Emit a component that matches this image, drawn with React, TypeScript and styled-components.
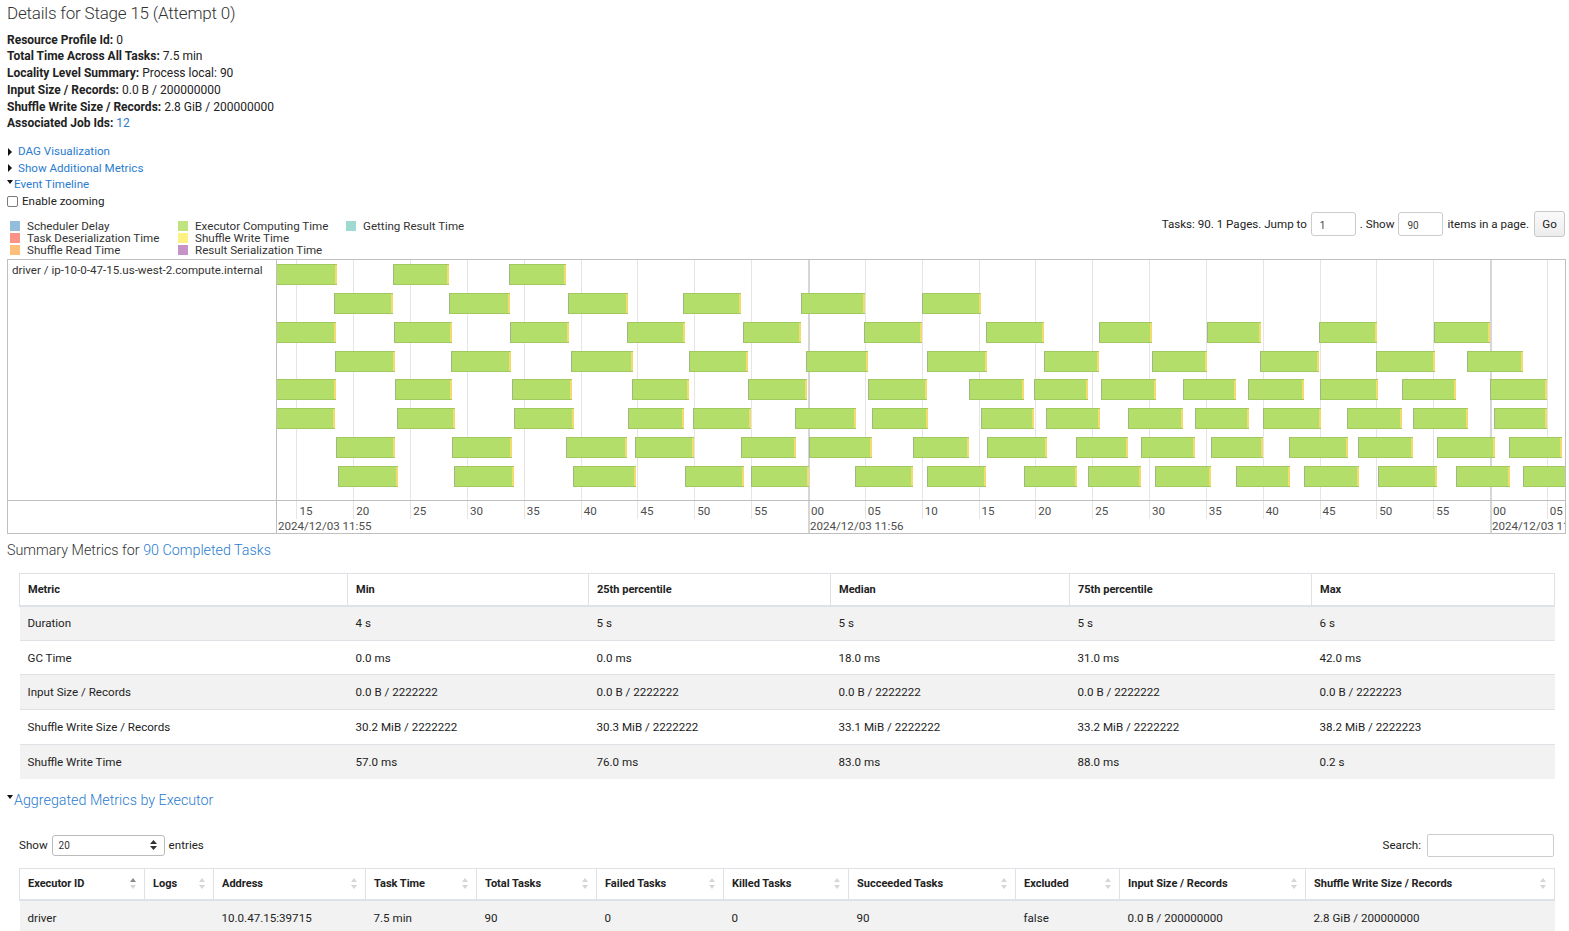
import styled, { createGlobalStyle } from "styled-components";

const GlobalStyle = createGlobalStyle`
  html, body {
    margin: 0;
    padding: 0;
    background: #fff;
  }
  body {
    font-family: Roboto, "Liberation Sans", Arial, sans-serif;
    font-size: 11.6px;
    color: #333;
  }
`;

const LINK = "#2a7ccf";

// task bars, absolute x (page px) per row
const ROWS: number[][][] = [
  [[276, 337], [393, 449], [509, 566]],
  [[334, 393], [449, 510], [568, 628], [683, 741], [801, 865], [922, 981]],
  [[276, 336], [394, 452], [510, 569], [627, 685], [743, 801], [864, 922], [986, 1044], [1099, 1152], [1207, 1261], [1319, 1377], [1434, 1490]],
  [[335, 395], [451, 511], [571, 633], [689, 748], [806, 868], [927, 987], [1044, 1099], [1152, 1207], [1260, 1319], [1376, 1435], [1467, 1523]],
  [[276, 336], [395, 452], [512, 572], [632, 689], [748, 807], [868, 927], [969, 1024], [1034, 1088], [1101, 1156], [1183, 1236], [1248, 1304], [1320, 1378], [1402, 1456], [1490, 1547]],
  [[276, 335], [397, 455], [514, 574], [628, 684], [693, 751], [795, 856], [872, 928], [981, 1034], [1046, 1100], [1128, 1183], [1195, 1249], [1263, 1321], [1347, 1402], [1413, 1468], [1494, 1547]],
  [[336, 395], [452, 512], [566, 627], [635, 694], [741, 796], [809, 872], [913, 969], [987, 1047], [1076, 1128], [1141, 1195], [1211, 1263], [1289, 1348], [1358, 1413], [1437, 1495], [1509, 1562]],
  [[338, 398], [454, 514], [573, 636], [685, 744], [751, 809], [855, 913], [927, 986], [1024, 1077], [1088, 1141], [1155, 1211], [1236, 1290], [1304, 1359], [1378, 1437], [1456, 1510], [1523, 1570]],
];
const ROW_TOPS = [4, 33, 62, 91, 119, 148, 177, 206];
const ORIGIN = 277;
const PX_PER_SEC = 11.3667;
const secX = (s: number) => 531 + (s - 60) * PX_PER_SEC;
const TICKS = Array.from({ length: 23 }, (_, i) => 15 + i * 5);

const LEGEND = [
  [
    ["#80B1D3", "Scheduler Delay"],
    ["#FB8072", "Task Deserialization Time"],
    ["#FDB462", "Shuffle Read Time"],
  ],
  [
    ["#B3DE69", "Executor Computing Time"],
    ["#FFED6F", "Shuffle Write Time"],
    ["#BC80BD", "Result Serialization Time"],
  ],
  [["#8DD3C7", "Getting Result Time"]],
];

const SUMMARY_COLS = [328, 241, 242, 239, 242, 243];
const SUMMARY_HEAD = ["Metric", "Min", "25th percentile", "Median", "75th percentile", "Max"];
const SUMMARY_ROWS = [
  ["Duration", "4 s", "5 s", "5 s", "5 s", "6 s"],
  ["GC Time", "0.0 ms", "0.0 ms", "18.0 ms", "31.0 ms", "42.0 ms"],
  ["Input Size / Records", "0.0 B / 2222222", "0.0 B / 2222222", "0.0 B / 2222222", "0.0 B / 2222222", "0.0 B / 2222223"],
  ["Shuffle Write Size / Records", "30.2 MiB / 2222222", "30.3 MiB / 2222222", "33.1 MiB / 2222222", "33.2 MiB / 2222222", "38.2 MiB / 2222223"],
  ["Shuffle Write Time", "57.0 ms", "76.0 ms", "83.0 ms", "88.0 ms", "0.2 s"],
];

const EXEC_COLS = [125, 69, 152, 111, 120, 127, 125, 167, 104, 186, 249];
const EXEC_HEAD = [
  "Executor ID", "Logs", "Address", "Task Time", "Total Tasks", "Failed Tasks",
  "Killed Tasks", "Succeeded Tasks", "Excluded", "Input Size / Records", "Shuffle Write Size / Records",
];
const EXEC_ROW = ["driver", "", "10.0.47.15:39715", "7.5 min", "90", "0", "0", "90", "false", "0.0 B / 200000000", "2.8 GiB / 200000000"];

function SortIcon({ active }: { active?: boolean }) {
  return (
    <svg width="6" height="11" viewBox="0 0 6 11">
      <path d="M3 0 L6 4 L0 4 Z" fill={active ? "#8a8a8a" : "#d6d6d6"} />
      <path d="M3 11 L6 7 L0 7 Z" fill="#d6d6d6" />
    </svg>
  );
}

export default function App() {
  return (
    <>
      <GlobalStyle />
      <Page>
        <Title>Details for Stage 15 (Attempt 0)</Title>
        <InfoList>
          <li><strong>Resource Profile Id:</strong> 0</li>
          <li><strong>Total Time Across All Tasks:</strong> 7.5 min</li>
          <li><strong>Locality Level Summary:</strong> Process local: 90</li>
          <li><strong>Input Size / Records:</strong> 0.0 B / 200000000</li>
          <li><strong>Shuffle Write Size / Records:</strong> 2.8 GiB / 200000000</li>
          <li><strong>Associated Job Ids:</strong> <Link>12</Link></li>
        </InfoList>

        <Toggles>
          <Toggle><Arrow /><Link>DAG Visualization</Link></Toggle>
          <Toggle><Arrow /><Link>Show Additional Metrics</Link></Toggle>
          <Toggle $open><Arrow $open /><Link>Event Timeline</Link></Toggle>
          <Toggle $open><CheckBox />Enable zooming</Toggle>
        </Toggles>

        <ControlRow>
          <Legend>
            {LEGEND.map((col, i) => (
              <LegendCol key={i}>
                {col.map(([c, t]) => (
                  <LegendItem key={t}>
                    <Swatch $color={c} />
                    {t}
                  </LegendItem>
                ))}
              </LegendCol>
            ))}
          </Legend>
          <Pager>
            Tasks: 90. 1 Pages. Jump to
            <PageInput defaultValue="1" />
            . Show
            <PageInput defaultValue="90" />
            items in a page.
            <GoButton>Go</GoButton>
          </Pager>
        </ControlRow>

        <Timeline>
          <LabelPanel>
            <GroupLabel>driver / ip-10-0-47-15.us-west-2.compute.internal</GroupLabel>
            <AxisSpacer />
          </LabelPanel>
          <CenterPanel>
            {TICKS.map((s) => (
              <GridLine key={s} $major={s % 60 === 0} style={{ left: secX(s) }} />
            ))}
            <ItemArea>
              {ROWS.map((row, r) =>
                row.map(([a, b], i) => (
                  <Bar key={`${r}-${i}`} style={{ left: a - ORIGIN, width: b - a, top: ROW_TOPS[r] }}>
                    <WriteSlice />
                  </Bar>
                ))
              )}
            </ItemArea>
            <Axis>
              {TICKS.map((s) => (
                <MinorLabel key={s} style={{ left: secX(s) + 3 }}>
                  {String(s % 60).padStart(2, "0")}
                </MinorLabel>
              ))}
              <MajorLabel style={{ left: 1 }}>2024/12/03 11:55</MajorLabel>
              <MajorLabel style={{ left: secX(60) + 2 }}>2024/12/03 11:56</MajorLabel>
              <MajorLabel style={{ left: secX(120) + 2 }}>2024/12/03 11:57</MajorLabel>
            </Axis>
          </CenterPanel>
        </Timeline>

        <SectionTitle>
          Summary Metrics for <Link>90 Completed Tasks</Link>
        </SectionTitle>
        <Table>
          <colgroup>
            {SUMMARY_COLS.map((w, i) => <col key={i} style={{ width: w }} />)}
          </colgroup>
          <thead>
            <tr>
              {SUMMARY_HEAD.map((h) => <Th key={h}>{h}</Th>)}
            </tr>
          </thead>
          <tbody>
            {SUMMARY_ROWS.map((row, i) => (
              <Tr key={i} $striped={i % 2 === 0}>
                {row.map((c, j) => <Td key={j}>{c}</Td>)}
              </Tr>
            ))}
          </tbody>
        </Table>

        <SectionTitle $gap={12}>
          <Arrow $open />
          <Link>Aggregated Metrics by Executor</Link>
        </SectionTitle>

        <TableTools>
          <ToolLabel>
            Show
            <Select>
              20
              <svg width="7" height="10" viewBox="0 0 7 10">
                <path d="M3.5 0 L7 4 L0 4 Z" fill="#333" />
                <path d="M3.5 10 L7 6 L0 6 Z" fill="#333" />
              </svg>
            </Select>
            entries
          </ToolLabel>
          <ToolLabel>
            Search:
            <SearchInput />
          </ToolLabel>
        </TableTools>

        <Table $gap={11}>
          <colgroup>
            {EXEC_COLS.map((w, i) => <col key={i} style={{ width: w }} />)}
          </colgroup>
          <thead>
            <tr>
              {EXEC_HEAD.map((h, i) => (
                <Th key={h}>
                  <SortHead>
                    {h}
                    <SortIcon active={i === 0} />
                  </SortHead>
                </Th>
              ))}
            </tr>
          </thead>
          <tbody>
            <Tr $striped>
              {EXEC_ROW.map((c, j) => <Td key={j}>{c}</Td>)}
            </Tr>
          </tbody>
        </Table>
      </Page>
    </>
  );
}

const Page = styled.div`
  padding: 0 3px 40px 7px;
`;

const Title = styled.h3`
  margin: 0;
  font-size: 17px;
  font-weight: 300;
  line-height: 26px;
  color: #333;
  letter-spacing: -0.2px;
`;

const InfoList = styled.ul`
  list-style: none;
  margin: 5.5px 0 0;
  padding: 0;
  font-size: 12px;
  line-height: 16.8px;
  color: #222;
  strong {
    font-weight: 700;
  }
`;

const Link = styled.a`
  color: ${LINK};
  text-decoration: none;
  cursor: pointer;
`;

const Toggles = styled.div`
  margin-top: 11px;
  line-height: 16.6px;
`;

const Toggle = styled.div<{ $open?: boolean }>`
  display: flex;
  align-items: center;
  padding-left: ${({ $open }) => ($open ? "0" : "1px")};
  color: #222;
`;

const Arrow = styled.span<{ $open?: boolean }>`
  display: inline-block;
  width: 0;
  height: 0;
  margin-right: ${({ $open }) => ($open ? "1px" : "6px")};
  ${({ $open }) =>
    $open
      ? `border-left: 3.5px solid transparent;
         border-right: 3.5px solid transparent;
         border-top: 4px solid #111;
         margin-top: -5px;`
      : `border-top: 4px solid transparent;
         border-bottom: 4px solid transparent;
         border-left: 4px solid #111;`}
`;

const CheckBox = styled.span`
  display: inline-block;
  width: 9px;
  height: 9px;
  border: 1px solid #7a7a7a;
  border-radius: 2px;
  margin-right: 4px;
  background: #fff;
`;

const ControlRow = styled.div`
  display: flex;
  justify-content: space-between;
  align-items: flex-start;
  margin-top: 1.5px;
  height: 46px;
  margin-bottom: 2px;
`;

const Legend = styled.div`
  display: flex;
  padding: 9px 0 0 3px;
`;

const LegendCol = styled.div`
  width: 168px;
`;

const LegendItem = styled.div`
  display: flex;
  align-items: center;
  height: 12px;
  line-height: 12px;
  white-space: nowrap;
  color: #333;
`;

const Swatch = styled.span<{ $color: string }>`
  width: 10px;
  height: 10px;
  margin-right: 7px;
  background: ${({ $color }) => $color};
  opacity: 0.85;
`;

const Pager = styled.div`
  display: flex;
  align-items: center;
  gap: 4px;
  height: 26px;
  color: #222;
  padding-right: 1px;
`;

const PageInput = styled.input`
  width: 45px;
  height: 24px;
  box-sizing: border-box;
  border: 1px solid #ccc;
  border-radius: 3px;
  padding: 2px 8px 0;
  font-family: inherit;
  font-size: 10px;
  color: #444;
`;

const GoButton = styled.button`
  margin-left: 1px;
  width: 31px;
  height: 26px;
  border: 1px solid #c8c8c8;
  border-radius: 3px;
  background: linear-gradient(#fafafa, #ececec);
  font-family: inherit;
  font-size: 11.6px;
  color: #222;
  padding: 0;
`;

const Timeline = styled.div`
  display: flex;
  border: 1px solid #bfbfbf;
  height: 273px;
`;

const LabelPanel = styled.div`
  width: 268px;
  flex: none;
  border-right: 1px solid #bfbfbf;
  display: flex;
  flex-direction: column;
`;

const GroupLabel = styled.div`
  height: 241px;
  padding: 3px 4px 0 4px;
  box-sizing: border-box;
  border-bottom: 1px solid #bfbfbf;
  white-space: nowrap;
  color: #333;
`;

const AxisSpacer = styled.div`
  flex: 1;
`;

const CenterPanel = styled.div`
  position: relative;
  flex: 1;
  overflow: hidden;
`;

const GridLine = styled.div<{ $major: boolean }>`
  position: absolute;
  top: 0;
  width: ${({ $major }) => ($major ? "2px" : "1px")};
  height: ${({ $major }) => ($major ? "273px" : "259px")};
  background: ${({ $major }) => ($major ? "#d6d6d6" : "#e5e5e5")};
`;

const ItemArea = styled.div`
  position: relative;
  height: 241px;
  border-bottom: 1px solid #bfbfbf;
  box-sizing: border-box;
`;

const Bar = styled.div`
  position: absolute;
  height: 21px;
  box-sizing: border-box;
  background: #b3de69;
  border: 1px solid #a2c95f;
  border-left-color: #9fb58a;
  display: flex;
  justify-content: flex-end;
`;

const WriteSlice = styled.span`
  width: 2px;
  background: #f2dc6c;
  margin-right: -1px;
`;

const Axis = styled.div`
  position: relative;
  height: 32px;
`;

const MinorLabel = styled.span`
  position: absolute;
  top: 3.5px;
  line-height: 13px;
  color: #4d4d4d;
`;

const MajorLabel = styled.span`
  position: absolute;
  top: 19px;
  line-height: 13px;
  color: #4d4d4d;
  white-space: nowrap;
`;

const SectionTitle = styled.h4<{ $gap?: number }>`
  display: flex;
  align-items: center;
  white-space: pre;
  margin: ${({ $gap }) => $gap ?? 7}px 0 0;
  font-size: 14.3px;
  font-weight: 300;
  line-height: 18px;
  color: #333;
`;

const Table = styled.table<{ $gap?: number }>`
  margin: ${({ $gap }) => $gap ?? 14}px 12px 0;
  width: 1535px;
  table-layout: fixed;
  border-collapse: collapse;
  color: #222;
`;

const Th = styled.th`
  height: 32px;
  padding: 0 8px;
  box-sizing: border-box;
  text-align: left;
  font-size: 11px;
  font-weight: 700;
  border: 1px solid #dee2e6;
  border-bottom-width: 2px;
  white-space: nowrap;
`;

const SortHead = styled.div`
  display: flex;
  align-items: center;
  justify-content: space-between;
`;

const Tr = styled.tr<{ $striped?: boolean }>`
  background: ${({ $striped }) => ($striped ? "#f2f2f2" : "#fff")};
`;

const Td = styled.td`
  height: 34.6px;
  padding: 0 8px;
  box-sizing: border-box;
  border-top: 1px solid #dee2e6;
  white-space: nowrap;
`;

const TableTools = styled.div`
  display: flex;
  justify-content: space-between;
  align-items: center;
  margin: 25px 12px 0;
  height: 23px;
`;

const ToolLabel = styled.label`
  display: flex;
  align-items: center;
  gap: 4px;
  color: #222;
`;

const Select = styled.div`
  display: flex;
  align-items: center;
  justify-content: space-between;
  width: 113px;
  height: 21px;
  box-sizing: border-box;
  padding: 0 7px 0 6px;
  border: 1px solid #bbb;
  border-radius: 3px;
  font-size: 10px;
  color: #333;
`;

const SearchInput = styled.input`
  width: 127px;
  height: 23px;
  box-sizing: border-box;
  border: 1px solid #ccc;
  border-radius: 2px;
  margin-left: 2px;
`;
